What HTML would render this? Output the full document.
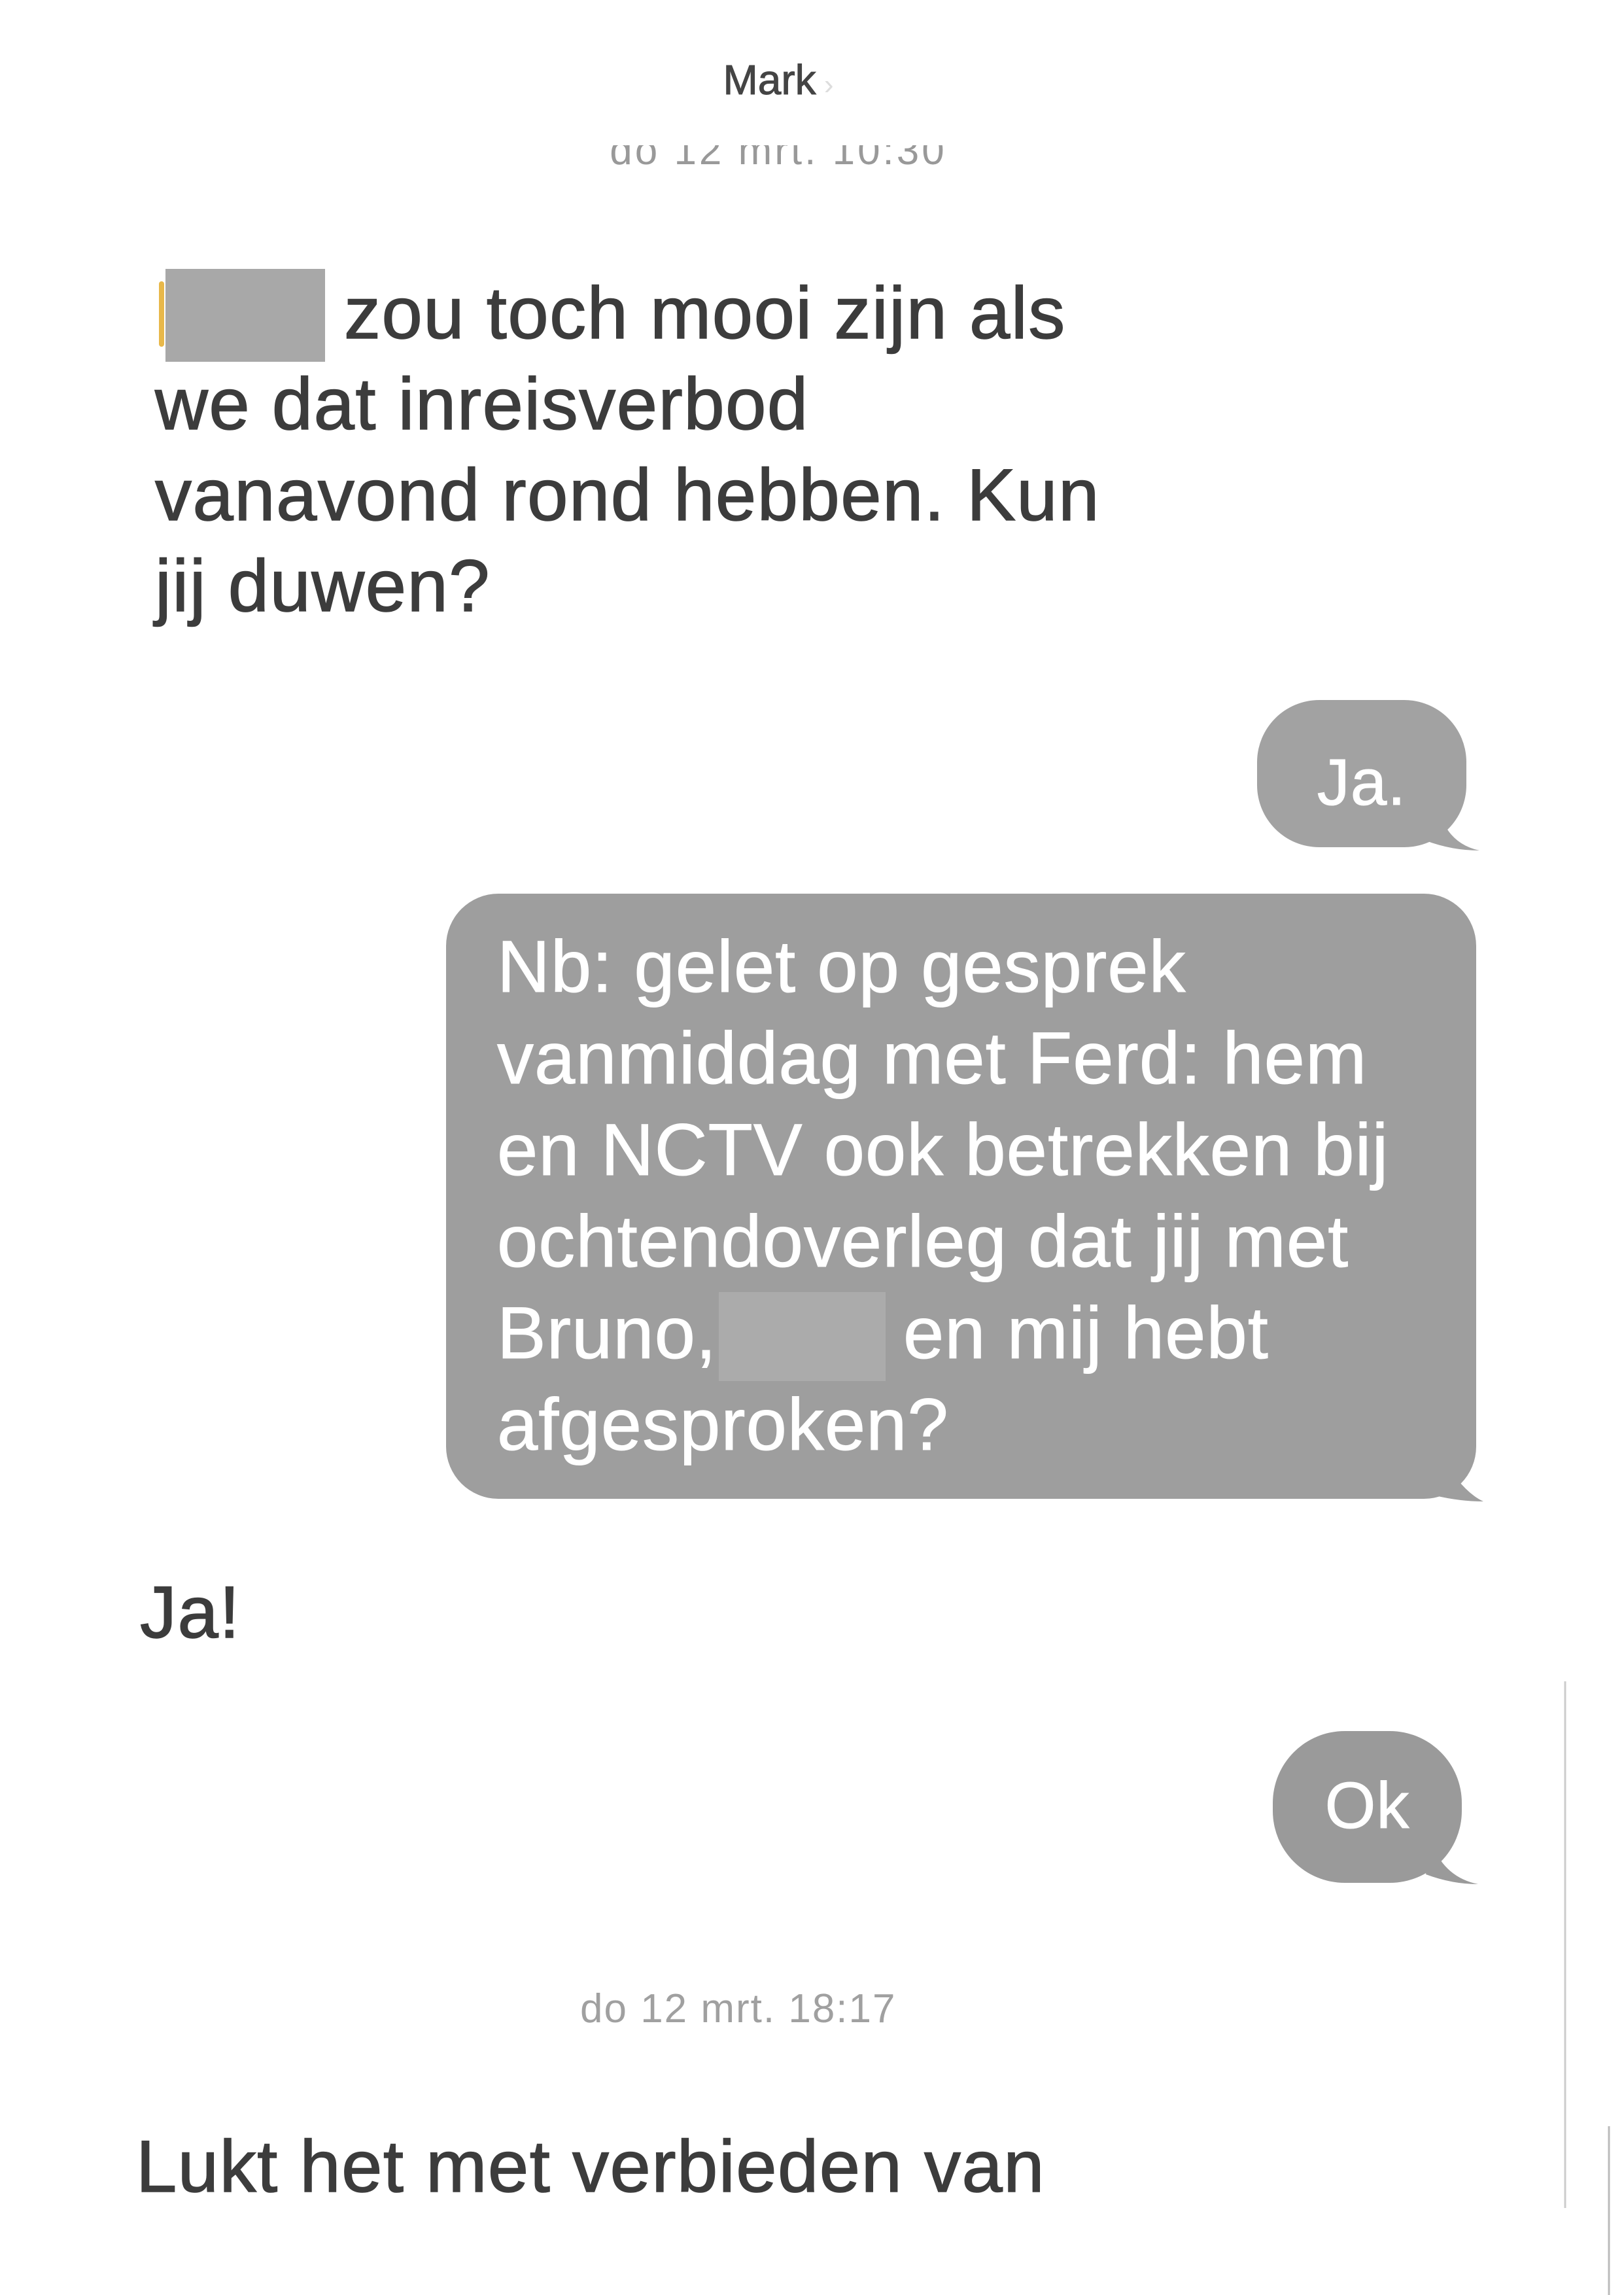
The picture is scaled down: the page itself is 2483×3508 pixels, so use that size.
<!DOCTYPE html>
<html><head><meta charset="utf-8"><style>
html,body{margin:0;padding:0;background:#fff;}
body{width:2483px;height:3508px;position:relative;overflow:hidden;font-family:"Liberation Sans",Arial,sans-serif;}
.a{position:absolute;white-space:nowrap;}
.msg{font-size:112px;line-height:139px;color:#3c3c3c;letter-spacing:1.5px;-webkit-text-stroke:1.5px #3c3c3c;}
.w{color:#fff;font-size:112px;line-height:140px;letter-spacing:1px;-webkit-text-stroke:1px #fff;}
</style></head><body>

<div class="a" style="left:0;width:2380px;top:90px;text-align:center;font-size:64px;line-height:64px;color:#444;-webkit-text-stroke:1px #444;">Mark<span style="color:#ddd;font-size:44px;-webkit-text-stroke:0;"> ›</span></div>

<div class="a" style="left:0;width:2380px;top:222px;height:38px;overflow:hidden;">
  <div style="position:absolute;left:0;width:2380px;top:-22px;text-align:center;font-size:62px;line-height:62px;color:#999;letter-spacing:4px;">do 12 mrt. 10:30</div>
</div>

<div style="position:absolute;left:243px;top:430px;width:8px;height:100px;background:#e8b84a;border-radius:4px;"></div>
<div style="position:absolute;left:253px;top:411px;width:244px;height:142px;background:#a8a8a8;"></div>
<div class="a msg" style="left:237px;top:409px;"><span style="display:inline-block;width:289px;"></span>zou toch mooi zijn als<br>we dat inreisverbod<br>vanavond rond hebben. Kun<br>jij duwen?</div>

<svg class="a" style="left:0;top:0" width="2483" height="3508">
  <rect x="1922" y="1070" width="320" height="225" rx="95" fill="#a2a2a2"/>
  <path d="M2200 1240 Q2215 1290 2262 1300 Q2220 1300 2180 1285 Z" fill="#a2a2a2"/>
  <rect x="682" y="1366" width="1575" height="925" rx="80" fill="#9e9e9e"/>
  <path d="M2200 2220 Q2235 2280 2268 2295 Q2230 2295 2190 2285 Z" fill="#9e9e9e"/>
  <rect x="1946" y="2646" width="289" height="232" rx="110" fill="#9a9a9a"/>
  <path d="M2190 2820 Q2210 2870 2260 2880 Q2220 2880 2180 2865 Z" fill="#9a9a9a"/>
  <line x1="2393" y1="2570" x2="2393" y2="3375" stroke="#ccc" stroke-width="3"/>
  <line x1="2460" y1="3250" x2="2460" y2="3508" stroke="#bbb" stroke-width="3"/>
</svg>

<div class="a w" style="left:1922px;width:320px;text-align:center;top:1146px;font-size:100px;line-height:100px;">Ja.</div>

<div style="position:absolute;left:1099px;top:1975px;width:255px;height:136px;background:#ababab;"></div>
<div class="a w" style="left:760px;top:1408px;">Nb: gelet op gesprek<br>vanmiddag met Ferd: hem<br>en NCTV ook betrekken bij<br>ochtendoverleg dat jij met<br>Bruno,<span style="display:inline-block;width:285px;"></span>en mij hebt<br>afgesproken?</div>

<div class="a msg" style="left:214px;top:2395px;">Ja!</div>

<div class="a w" style="left:1946px;width:289px;text-align:center;top:2710px;font-size:100px;line-height:100px;">Ok</div>

<div class="a" style="left:887px;top:3040px;font-size:62px;line-height:62px;color:#a0a0a0;letter-spacing:2px;">do 12 mrt. 18:17</div>

<div class="a msg" style="left:208px;top:3242px;">Lukt het met verbieden van</div>

</body></html>
